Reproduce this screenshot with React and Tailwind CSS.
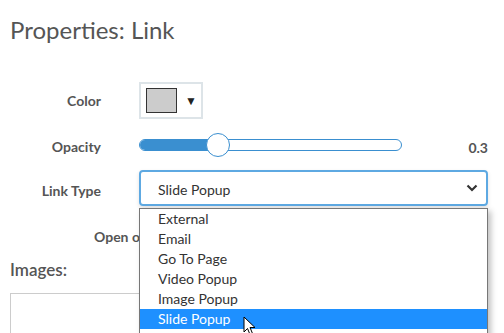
import React from 'react';

const linkTypes = ['External', 'Email', 'Go To Page', 'Video Popup', 'Image Popup', 'Slide Popup'];

function Cursor() {
  return (
    <svg className="absolute left-[103px] top-[107px]" width="14" height="20" viewBox="0 0 14 20">
      <path d="M1 1 L1 16 L4.5 12.5 L7 18.5 L9.5 17.5 L7 11.5 L12 11.5 Z" fill="#fff" stroke="#000" strokeWidth="1" strokeLinejoin="round" />
    </svg>
  );
}

export default function App() {
  const selected = 'Slide Popup';
  const opacity = 0.3;

  return (
    <div className="w-[504px] h-[333px] overflow-hidden bg-white font-['Lato',sans-serif] text-[#555]">
      <div className="pl-[10px] pr-[16px]">
        <h2 className="text-[24px] leading-[30px] pt-[15px]">Properties: Link</h2>

        <div className="flex items-center h-[37px] mt-[37px]">
          <div className="w-[91px] text-right text-[14px] font-bold">Color</div>
          <div className="ml-[38px] flex items-center w-[64px] h-[37px] border-2 border-[#dde4e8] pl-[5px]">
            <div className="w-[31px] h-[25px] bg-[#cccccc] border border-[#333]" />
            <span className="ml-[8px] text-[12px] text-[#222]">▼</span>
          </div>
        </div>

        <div className="flex items-center h-[26px] mt-[13px]">
          <div className="w-[91px] text-right text-[14px] font-bold pt-[3px]">Opacity</div>
          <div className="ml-[38px] relative w-[263px] h-[12px] rounded-full border border-[#3a8fd0] bg-white">
            <div className="h-full w-[78px] rounded-full bg-[#3a8fd0]" />
            <div className="absolute left-[66px] top-[-7px] w-[24px] h-[24px] rounded-full bg-white border border-[#3a8fd0]" />
          </div>
          <div className="ml-auto text-[14px] font-bold text-[#555] pt-[5px]">{opacity}</div>
        </div>

        <div className="flex items-center h-[36px] mt-[12px]">
          <div className="w-[91px] text-right text-[14px] font-bold pt-[4px]">Link Type</div>
          <div className="ml-[38px] relative flex-1">
            <div className="flex items-center justify-between h-[36px] rounded-[4px] border-2 border-[#5ea9e2] shadow-[0_2px_4px_rgba(0,0,0,0.12)] pl-[17px] pr-[8px] text-[14px] text-[#333]">
              <span className="pt-[2px]">{selected}</span>
              <svg width="12" height="8" viewBox="0 0 12 8">
                <path d="M1.5 1.5 L6 6 L10.5 1.5" fill="none" stroke="#333" strokeWidth="2.2" />
              </svg>
            </div>
            <div className="absolute z-10 left-0 right-0 top-[38px] h-[140px] bg-white border border-[#777] shadow-[3px_3px_6px_rgba(0,0,0,0.25)] text-[14px] text-[#333]">
              {linkTypes.map((t) => (
                <div
                  key={t}
                  className={t === selected ? 'h-[20px] leading-[20px] pl-[18px] bg-[#1e90ff] text-white' : 'h-[20px] leading-[20px] pl-[18px]'}
                >
                  {t}
                </div>
              ))}
              <Cursor />
            </div>
          </div>
        </div>

        <div className="flex items-center h-[20px] mt-[20px]">
          <div className="w-[129px] overflow-hidden">
            <div className="pl-[84px] text-[14px] font-bold whitespace-nowrap">Open on new tab</div>
          </div>
        </div>

        <h3 className="text-[17px] leading-[24px] mt-[12px] font-semibold">Images:</h3>
        <div className="mt-[11px] h-[60px] border border-[#ccc]" />
      </div>
    </div>
  );
}
